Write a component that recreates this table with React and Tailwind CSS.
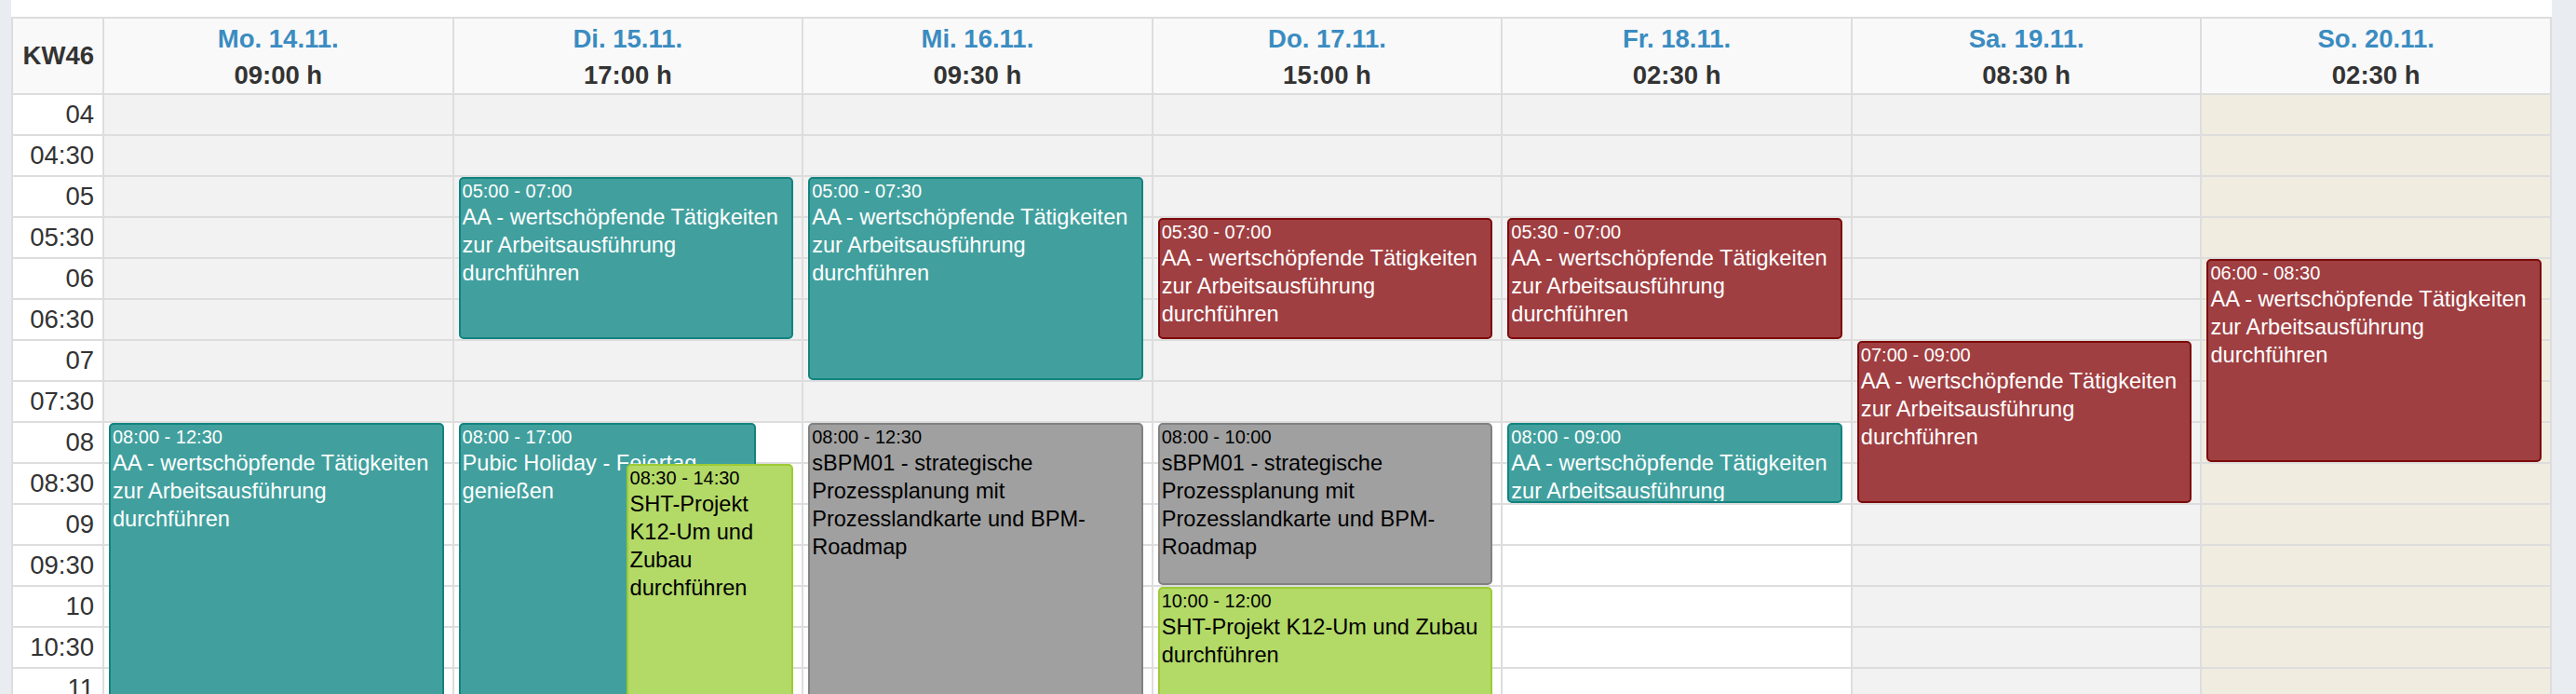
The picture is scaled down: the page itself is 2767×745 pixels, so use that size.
const SLOT = 44

const TIMES = [
  '04', '04:30', '05', '05:30', '06', '06:30', '07', '07:30',
  '08', '08:30', '09', '09:30', '10', '10:30', '11', '11:30', '12', '12:30',
]

const AA = 'AA - wertschöpfende Tätigkeiten zur Arbeitsausführung durchführen'
const BPM = 'sBPM01 - strategische Prozessplanung mit Prozesslandkarte und BPM-Roadmap'
const SHT = 'SHT-Projekt K12-Um und Zubau durchführen'

const EVENT_COLORS = {
  teal: 'bg-[#41a09e] border-[#12837f] text-white',
  red: 'bg-[#a03f42] border-[#7d0a0a] text-white',
  gray: 'bg-[#a0a0a0] border-[#818181] text-black',
  lime: 'bg-[#b3d967] border-[#9dcb34] text-black',
}

// start/end as half-hour slots counted from 04:00
const DAYS = [
  {
    label: 'Mo. 14.11.', total: '09:00 h', kind: 'work',
    events: [{ time: '08:00 - 12:30', title: AA, color: 'teal', start: 8, end: 17 }],
  },
  {
    label: 'Di. 15.11.', total: '17:00 h', kind: 'work',
    events: [
      { time: '05:00 - 07:00', title: AA, color: 'teal', start: 2, end: 6 },
      { time: '08:00 - 17:00', title: 'Pubic Holiday - Feiertag genießen', color: 'teal', start: 8, end: 26, width: 319 },
      { time: '08:30 - 14:30', title: SHT, color: 'lime', start: 9, end: 21, left: 185, width: 179 },
    ],
  },
  {
    label: 'Mi. 16.11.', total: '09:30 h', kind: 'work',
    events: [
      { time: '05:00 - 07:30', title: AA, color: 'teal', start: 2, end: 7 },
      { time: '08:00 - 12:30', title: BPM, color: 'gray', start: 8, end: 17 },
    ],
  },
  {
    label: 'Do. 17.11.', total: '15:00 h', kind: 'work',
    events: [
      { time: '05:30 - 07:00', title: AA, color: 'red', start: 3, end: 6 },
      { time: '08:00 - 10:00', title: BPM, color: 'gray', start: 8, end: 12 },
      { time: '10:00 - 12:00', title: SHT, color: 'lime', start: 12, end: 16 },
    ],
  },
  {
    label: 'Fr. 18.11.', total: '02:30 h', kind: 'work',
    events: [
      { time: '05:30 - 07:00', title: AA, color: 'red', start: 3, end: 6 },
      { time: '08:00 - 09:00', title: AA, color: 'teal', start: 8, end: 10 },
    ],
  },
  {
    label: 'Sa. 19.11.', total: '08:30 h', kind: 'weekend',
    events: [{ time: '07:00 - 09:00', title: AA, color: 'red', start: 6, end: 10 }],
  },
  {
    label: 'So. 20.11.', total: '02:30 h', kind: 'sunday',
    events: [{ time: '06:00 - 08:30', title: AA, color: 'red', start: 4, end: 9 }],
  },
]

function cellBg(kind, slot) {
  if (kind === 'sunday') return 'bg-[#f0ece0]'
  if (kind === 'weekend') return 'bg-[#f2f2f2]'
  return slot < 8 ? 'bg-[#f2f2f2]' : 'bg-white'
}

function CalendarEvent({ ev }) {
  return (
    <div
      className={`absolute overflow-hidden rounded-[5px] border-2 px-[2px] ${EVENT_COLORS[ev.color]}`}
      style={{
        top: ev.start * SLOT,
        height: (ev.end - ev.start) * SLOT - 2,
        left: ev.left ?? 5,
        width: ev.width ?? 'calc(100% - 14px)',
      }}
    >
      <div className="text-[20px] leading-[26px]">{ev.time}</div>
      <div className="text-[23.6px] leading-[30px]">{ev.title}</div>
    </div>
  )
}

export default function App() {
  return (
    <div
      className="w-[2767px] h-[745px] overflow-hidden bg-[#e9edf2] pl-[12px] pr-[26px] text-[#333]"
      style={{ fontFamily: '"Liberation Sans", Arial, sans-serif' }}
    >
      <div className="h-full bg-white pt-[18px]">
        <div className="grid grid-cols-[98px_repeat(7,minmax(0,1fr))] border-t-2 border-l-2 border-[#ddd]">
          {/* Kopfzeile */}
          <div className="flex h-[82px] items-center justify-end border-r-2 border-b-2 border-[#ddd] bg-[#f9f9f9] pr-[9px] text-[27.5px] font-bold">
            KW46
          </div>
          {DAYS.map(d => (
            <div key={d.label} className="h-[82px] border-r-2 border-b-2 border-[#ddd] bg-[#f9f9f9] pt-[2px] text-center text-[27.5px] font-bold leading-[39px]">
              <div className="text-[#3a8cc1]">{d.label}</div>
              <div className="text-[#333]">{d.total}</div>
            </div>
          ))}

          {/* Zeitspalte */}
          <div className="border-r-2 border-[#ddd]">
            {TIMES.map(t => (
              <div key={t} className="h-[44px] border-b-2 border-[#ddd] bg-white pr-[9px] text-right text-[27.5px] leading-[42px]">
                {t}
              </div>
            ))}
          </div>

          {/* Tage */}
          {DAYS.map(d => (
            <div key={d.label} className="relative border-r-2 border-[#ddd]">
              {TIMES.map((t, i) => (
                <div key={t} className={`h-[44px] border-b-2 border-[#ddd] ${cellBg(d.kind, i)}`} />
              ))}
              {d.events.map(ev => (
                <CalendarEvent key={ev.time + ev.color} ev={ev} />
              ))}
            </div>
          ))}
        </div>
      </div>
    </div>
  )
}
